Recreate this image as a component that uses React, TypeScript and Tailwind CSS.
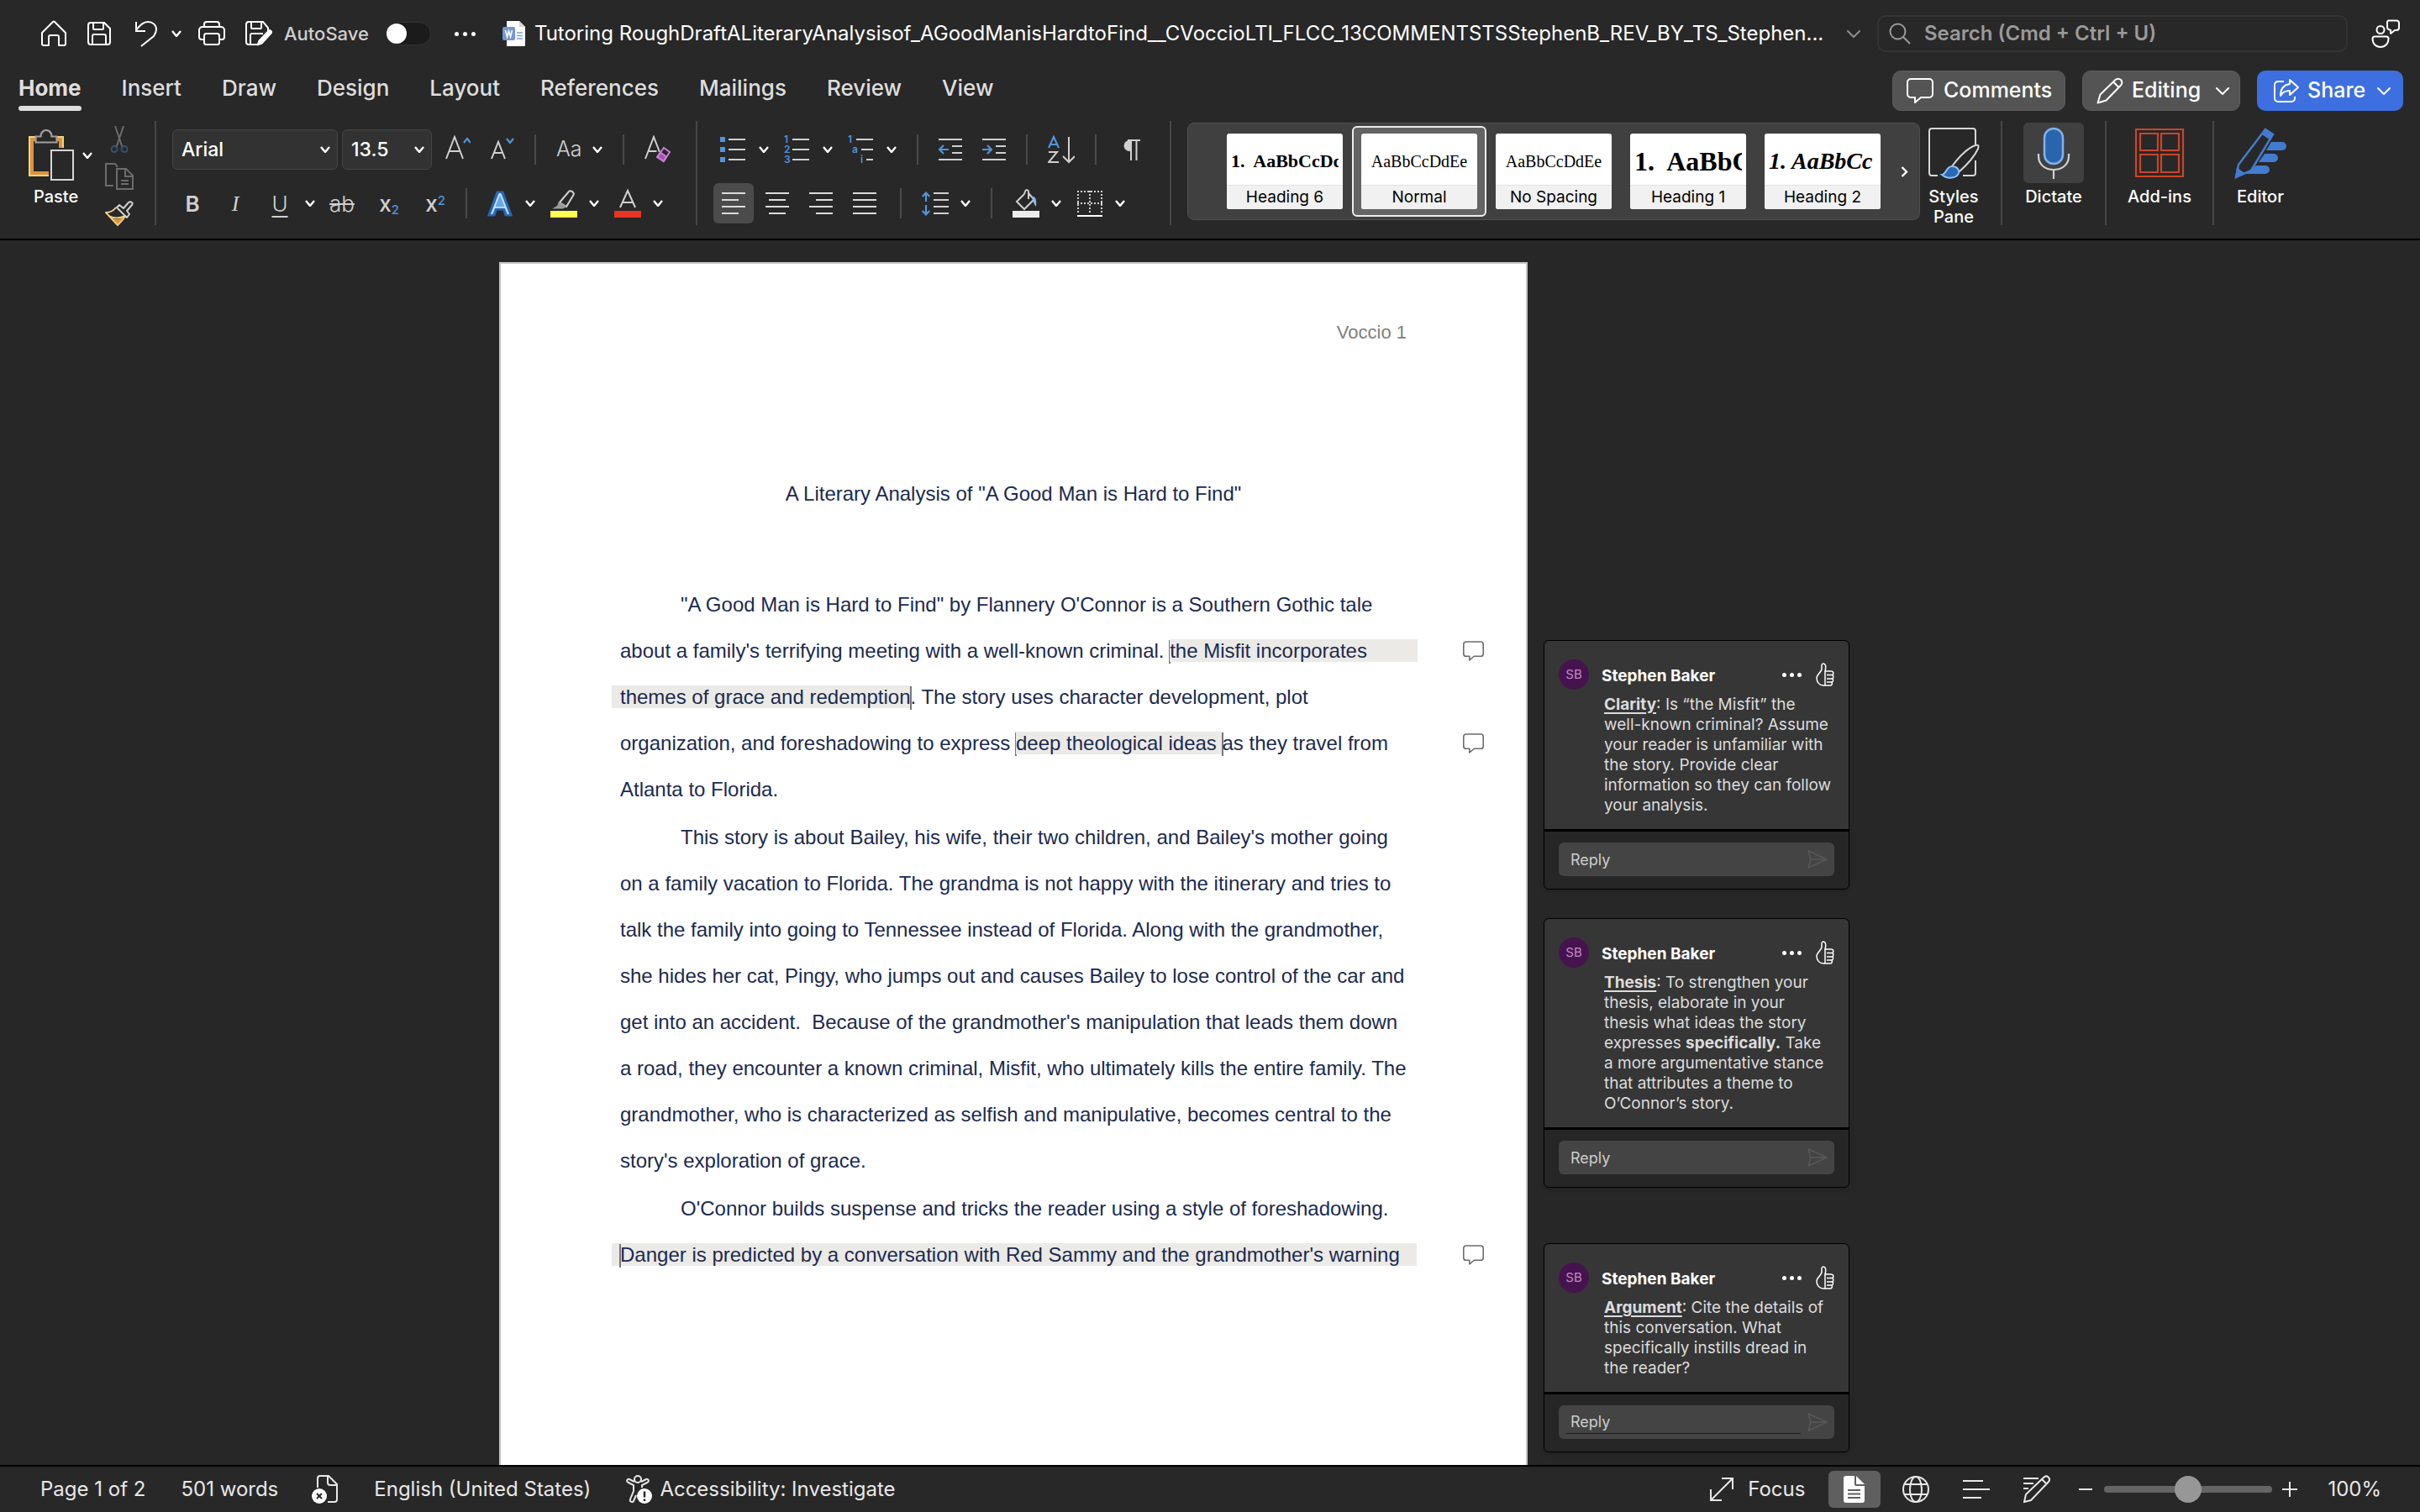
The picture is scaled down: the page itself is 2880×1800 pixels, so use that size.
import type { ReactNode } from 'react';

const stroke = { fill: 'none', stroke: 'currentColor', strokeWidth: 2 } as const;

const Chevron = ({ className = 'text-white' }: { className?: string }) => (
  <svg width="12" height="8" viewBox="0 0 12 8" className={`shrink-0 ${className}`} aria-hidden="true">
    <path d="M1 1l5 6 5-6" fill="none" stroke="currentColor" strokeWidth="2.4" />
  </svg>
);

const ThinChevron = ({ className = '' }: { className?: string }) => (
  <svg width="16" height="9" viewBox="0 0 16 9" className={`shrink-0 ${className}`} aria-hidden="true">
    <path d="M1 1l7 7 7-7" {...stroke} strokeLinecap="round" />
  </svg>
);

const Bubble = ({ w, h, className = '' }: { w: number; h: number; className?: string }) => (
  <svg width={w} height={h} viewBox="0 0 32 30" className={`shrink-0 ${className}`} aria-hidden="true">
    <path d="M5 1h22a4 4 0 0 1 4 4v14a4 4 0 0 1-4 4H17l-7 6v-6H5a4 4 0 0 1-4-4V5a4 4 0 0 1 4-4z" {...stroke} strokeLinejoin="round" />
  </svg>
);

/* Title bar */

const TitleBar = () => (
  <header className="flex h-20 items-center pr-6 pl-12 text-white">
    <button type="button" aria-label="Home">
      <svg width="32" height="32" viewBox="0 0 32 32" {...stroke}>
        <path d="M2 15L15 2c.6-.6 1.400-.6 2 0l13 13v13c0 1.100-.9 2-2 2h-6V20c0-1.100-.9-2-2-2h-8c-1.100 0-2 .9-2 2v10H4c-1.100 0-2-.9-2-2z" strokeLinejoin="round" />
      </svg>
    </button>
    <button type="button" aria-label="Save" className="ml-6">
      <svg width="28" height="30" viewBox="0 0 28 30" {...stroke}>
        <path d="M4 2h16l7 7v16a3 3 0 0 1-3 3H4a3 3 0 0 1-3-3V5a3 3 0 0 1 3-3zM7 2v7a1 1 0 0 0 1 1h10a1 1 0 0 0 1-1V2M6 28V18a2 2 0 0 1 2-2h12a2 2 0 0 1 2 2v10" />
      </svg>
    </button>
    <button type="button" aria-label="Undo" className="ml-7">
      <svg width="28" height="32" viewBox="0 0 28 32" {...stroke}>
        <path d="M2 2v11h11M2 12C7 5 11 2 16 2c6 0 10 4 10 9 0 3-1 5-3 8L8 31" />
      </svg>
    </button>
    <button type="button" aria-label="Undo history" className="ml-4"><Chevron /></button>
    <button type="button" aria-label="Print" className="ml-5">
      <svg width="32" height="30" viewBox="0 0 32 30" {...stroke}>
        <path d="M7 7V4a3 3 0 0 1 3-3h12a3 3 0 0 1 3 3v3M7 22H4a3 3 0 0 1-3-3v-8a4 4 0 0 1 4-4h22a4 4 0 0 1 4 4v8a3 3 0 0 1-3 3h-3" />
        <rect x="7" y="15" width="18" height="13" rx="2.500" />
      </svg>
    </button>
    <button type="button" aria-label="Save a copy" className="ml-6">
      <svg width="32" height="32" viewBox="0 0 32 32" {...stroke}>
        <path d="M14 29H4a3 3 0 0 1-3-3V5a3 3 0 0 1 3-3h17l6 7v6M7 2v7a1 1 0 0 0 1 1h10a1 1 0 0 0 1-1V2M6 29V18a2 2 0 0 1 2-2h13" />
        <path d="M14 30l2-6L27 12.500a2.600 2.600 0 0 1 4 3.500L20 28z" fill="currentColor" strokeWidth="1" />
      </svg>
    </button>
    <label className="ml-[14px] flex items-center gap-5 font-medium text-[#cfcfcf]">
      AutoSave
      <input
        type="checkbox"
        className="h-7 w-[54px] appearance-none rounded-full border border-[#333] bg-[#1b1b1b] before:mt-px before:block before:size-6 before:rounded-full before:bg-white"
      />
    </label>
    <button type="button" aria-label="More" className="ml-7 flex gap-1">
      <i className="size-[5px] rounded-full bg-white" />
      <i className="mx-px size-[5px] rounded-full bg-white" />
      <i className="size-[5px] rounded-full bg-white" />
    </button>
    <svg width="28" height="30" viewBox="0 0 28 30" className="ml-8 shrink-0" aria-hidden="true">
      <path d="M5 0h15l7 7v22a1 1 0 0 1-1 1H5z" fill="#fff" />
      <path d="M20 0v7h7" fill="#d5d5d5" />
      <path d="M17 14h7M17 17.500h7M17 21h7" stroke="#7ba0dc" strokeWidth="1.300" />
      <rect x="0" y="7" width="15" height="16" rx="2" fill="#7595d4" />
      <path d="M3.500 11l2 8 2-7 2 7 2-8" fill="none" stroke="#fff" strokeWidth="1.600" />
    </svg>
    <h1 className="ml-[10px] whitespace-nowrap text-[24px] text-white">
      Tutoring RoughDraftALiteraryAnalysisof_AGoodManisHardtoFind__CVoccioLTI_FLCC_13COMMENTSTSStephenB_REV_BY_TS_Stephen...
    </h1>
    <button type="button" aria-label="Document menu" className="ml-auto pr-5"><ThinChevron className="text-[#8f8f8f]" /></button>
    <label className="flex h-11 w-[560px] shrink-0 items-center gap-4 rounded-[10px] border-2 border-[#343434] px-3 text-[24px] text-[#9a9a9a]">
      <svg width="26" height="26" viewBox="0 0 26 26" {...stroke} aria-hidden="true">
        <circle cx="10.500" cy="10.500" r="9" />
        <path d="M17 17l8 8" />
      </svg>
      <input type="search" aria-label="Search" placeholder="Search (Cmd + Ctrl + U)" className="min-w-0 flex-1 bg-transparent font-semibold outline-none placeholder:text-[#9a9a9a]" />
    </label>
    <button type="button" aria-label="Presence" className="ml-7">
      <svg width="34" height="34" viewBox="0 0 34 34" {...stroke}>
        <circle cx="11" cy="12.500" r="4.500" />
        <path d="M4 20.500h14a2.500 2.500 0 0 1 2.500 2.500c0 6-4 10-9.500 10S1.500 29 1.500 23A2.500 2.500 0 0 1 4 20.500zM20 1.500h10a3 3 0 0 1 3 3V10a3 3 0 0 1-3 3h-2l-5 4v-4.200c-3-.3-4-1.300-4-3.800V4.500a3 3 0 0 1 1-3z" strokeLinejoin="round" />
      </svg>
    </button>
  </header>
);

const tabs = ['Home', 'Insert', 'Draw', 'Design', 'Layout', 'References', 'Mailings', 'Review', 'View'];

const TabBar = () => (
  <div className="flex h-16 items-start justify-between pr-5 pl-[22px]">
    <nav aria-label="Ribbon tabs" className="flex gap-12 pt-[9px] text-[26px] leading-8 text-[#dedede]">
      {tabs.map((tab) => (
        <button
          type="button"
          key={tab}
          className={tab === 'Home' ? 'font-bold after:mt-[5px] after:block after:h-[6px] after:rounded-full after:bg-[#dedede]' : 'pb-[11px] font-medium'}
        >
          {tab}
        </button>
      ))}
    </nav>
    <div className="flex gap-5 pt-1 text-[25px] font-medium text-white">
      <button type="button" className="flex h-12 w-[206px] items-center gap-3 rounded-[10px] border border-[#5c5c5c] bg-[#545454] pl-4">
        <Bubble w={32} h={30} />
        Comments
      </button>
      <button type="button" className="flex h-12 w-[188px] items-center gap-[10px] rounded-[10px] border border-[#5c5c5c] bg-[#545454] pl-4">
        <svg width="32" height="32" viewBox="0 0 32 32" {...stroke} aria-hidden="true">
          <path d="M1.500 30.500l3-10L22.500 3a4.500 4.500 0 0 1 6.500 6.500L11.500 27.500zM20 5.500l6.500 6.500" strokeLinejoin="round" />
        </svg>
        Editing
        <ThinChevron className="ml-2" />
      </button>
      <button type="button" className="flex h-12 w-[174px] items-center gap-[10px] rounded-[10px] bg-[#3d6fe0] pl-5">
        <svg width="30" height="30" viewBox="0 0 30 30" {...stroke} aria-hidden="true">
          <path d="M12 4H5a4 4 0 0 0-4 4v16a4 4 0 0 0 4 4h16a4 4 0 0 0 4-4v-2" />
          <path d="M19 2l10 9-10 9v-5c-5 0-8 1-11 6 0-8 4-13 11-14z" strokeLinejoin="round" />
        </svg>
        Share
        <ThinChevron className="ml-1" />
      </button>
    </div>
  </div>
);

/* Ribbon */

const Rule = () => <span className="h-[124px] w-[2px] shrink-0 bg-[#474747]" />;
const Sep = () => <span className="h-9 w-[2px] shrink-0 bg-[#4a4a4a]" />;

const Split = ({ label, children }: { label: string; children: ReactNode }) => (
  <button type="button" aria-label={label} className="flex items-center gap-[14px]">
    <svg width="32" height="34" viewBox="0 0 32 34" className="overflow-visible" aria-hidden="true">{children}</svg>
    <Chevron />
  </button>
);

const Icon = ({ label, w = 28, children }: { label: string; w?: number; children: ReactNode }) => (
  <button type="button" aria-label={label}>
    <svg width={w} height="34" viewBox={`0 0 ${w} 34`} aria-hidden="true">{children}</svg>
  </button>
);

const ClipboardGroup = () => (
  <div className="flex pl-8">
    <button type="button" className="mt-[10px] flex w-[78px] flex-col items-center">
      <span className="flex items-center gap-2">
        <svg width="58" height="62" viewBox="0 0 58 62" fill="none" aria-hidden="true">
          <path d="M3 9h40v46H3z" stroke="#f3d489" strokeWidth="2" />
          <path d="M6 12h34v40H6z" stroke="#dd9439" strokeWidth="4" />
          <path d="M10.500 15.500V8.500h6c0-10 13-10 13 0h6v7z" fill="#282828" stroke="#a0a0a0" strokeWidth="2.200" />
          <path d="M26 22h32v40H26z" fill="#282828" />
          <path d="M29 25h26v35H29z" stroke="#d6d6d6" strokeWidth="2" />
        </svg>
        <Chevron />
      </span>
      <span className="mt-[6px] self-start pl-2 leading-6">Paste</span>
    </button>
    <div className="mr-[25px] ml-[15px] flex w-[34px] flex-col items-center gap-3 pt-[6px]">
      <button type="button" aria-label="Cut">
        <svg width="34" height="32" viewBox="0 0 34 32" fill="none" strokeWidth="2">
          <path d="M12 0l8.500 25M22 0l-8.500 25" stroke="#6c6c6c" />
          <circle cx="11" cy="27.500" r="3.500" stroke="#37536f" />
          <circle cx="23" cy="27.500" r="3.500" stroke="#37536f" />
        </svg>
      </button>
      <button type="button" aria-label="Copy">
        <svg width="34" height="32" viewBox="0 0 34 32" fill="none" stroke="#6c6c6c" strokeWidth="2">
          <path d="M10 27H1V1h11l3 4M14 7h11l8 8v16H14zM24 7v9h9M19 21h9M19 25h9" />
        </svg>
      </button>
      <button type="button" aria-label="Format painter">
        <svg width="34" height="32" viewBox="0 0 34 32" fill="none" strokeWidth="2" strokeLinejoin="round">
          <path d="M5 20c7 4 12 4 19-.5L15 29z" fill="#dd9439" />
          <path d="M13 9c-3 4-7 6-12 6l14 15c4-4 8-8 9-11" stroke="#f0cf83" />
          <path d="M5 19.500c7 3 12 3 19-.5" stroke="#f0cf83" />
          <path d="M14 9l3-3 5 4 6-7c3-2 6 1 4 3l-6 7 3 4-3 4z" stroke="#d0d0d0" />
        </svg>
      </button>
    </div>
  </div>
);

const FontGroup = () => (
  <div className="flex w-[642px] shrink-0 flex-col gap-4 pt-[10px] pl-[19px]">
    <div className="flex h-12 items-center gap-4">
      <div className="flex gap-[5px] text-[23px] text-white">
        <label className="grid h-12 w-[197px] items-center rounded-md border border-[#454545] bg-[#323232]">
          <select aria-label="Font" className="col-start-1 row-start-1 h-full w-full appearance-none bg-transparent pl-[10px]">
            <option>Arial</option>
          </select>
          <span className="col-start-1 row-start-1 justify-self-end pr-2"><Chevron /></span>
        </label>
        <label className="grid h-12 w-[107px] items-center rounded-md border border-[#454545] bg-[#323232]">
          <select aria-label="Font size" className="col-start-1 row-start-1 h-full w-full appearance-none bg-transparent pl-[10px]">
            <option>13.5</option>
          </select>
          <span className="col-start-1 row-start-1 justify-self-end pr-2"><Chevron /></span>
        </label>
      </div>
      <div className="flex items-center gap-6">
        <Icon label="Grow font" w={30}>
          <path d="M1 28L11 2l10 26M4.500 19h13" fill="none" stroke="#d0d0d0" strokeWidth="2" />
          <path d="M22 9l4-5 4 5" fill="none" stroke="#4f95dc" strokeWidth="2.200" />
        </Icon>
        <Icon label="Shrink font">
          <path d="M1 28l8-20 8 20M4 21h10" fill="none" stroke="#d0d0d0" strokeWidth="2" />
          <path d="M19 4l4 5 4-5" fill="none" stroke="#4f95dc" strokeWidth="2.200" />
        </Icon>
        <Sep />
        <button type="button" aria-label="Change case" className="flex items-center gap-3 text-[25px] font-light text-[#d0d0d0]">
          Aa
          <Chevron />
        </button>
        <Sep />
        <Icon label="Clear formatting" w={32}>
          <path d="M1 28L11 2l7 18M4.500 19h10" fill="none" stroke="#d0d0d0" strokeWidth="2" />
          <path d="M23 15l7 5-7 11-8-5z" fill="#282828" stroke="#c67fd4" strokeWidth="2" />
          <path d="M19 20.500l7 5-3.500 5.500-7-5z" fill="#a74fb8" stroke="#c67fd4" strokeWidth="2" />
        </Icon>
      </div>
    </div>
    <div className="flex h-12 items-center text-[26px] text-[#d0d0d0]">
      <button type="button" className="w-12 font-semibold">B</button>
      <button type="button" className="w-[54px] font-['Liberation_Serif',serif] italic">I</button>
      <button type="button" className="w-[52px] font-light underline underline-offset-[5px]">U</button>
      <button type="button" aria-label="Underline style" className="flex w-5 justify-center"><Chevron /></button>
      <button type="button" className="w-14 font-light line-through">ab</button>
      <button type="button" aria-label="Subscript" className="w-14">x<sub className="text-[15px] text-[#4f95dc]">2</sub></button>
      <button type="button" aria-label="Superscript" className="w-[54px]">x<sup className="text-[15px] text-[#4f95dc]">2</sup></button>
      <div className="ml-[9px] flex items-center gap-[18px]">
        <span className="pr-[5px]"><span className="block h-9 w-[2px] bg-[#4a4a4a]" /></span>
        <Split label="Text effects">
          <path d="M3 31L13 4h6l10 27h-6l-2.500-7h-9L9 31z" fill="#6aa9e9" stroke="#2a67b4" strokeWidth="3" />
          <path d="M6 30L15.500 6h1L26 30M9.500 22h13" fill="none" stroke="#d7e9fb" strokeWidth="1.500" />
        </Split>
        <Split label="Highlight">
          <path d="M11 16L22 3c2-2 7 1 5.500 4L19 21z" fill="none" stroke="#d0d0d0" strokeWidth="2" />
          <path d="M10 15l9 6-4 2.500H2L8 20z" fill="#9a9a9a" />
          <rect y="26" width="32" height="8" fill="#fcfc52" />
        </Split>
        <Split label="Font color">
          <path d="M7 22L16 2l9 20M10 16h12" fill="none" stroke="#d0d0d0" strokeWidth="2" />
          <rect y="26" width="32" height="8" fill="#e93323" />
        </Split>
      </div>
    </div>
  </div>
);

const alignments = [
  { label: 'Align left', d: 'M0 5h28M0 13h20M0 21h28M0 29h20' },
  { label: 'Center', d: 'M0 5h28M4 13h20M0 21h28M4 29h20' },
  { label: 'Align right', d: 'M0 5h28M8 13h20M0 21h28M8 29h20' },
  { label: 'Justify', d: 'M0 5h28M0 13h28M0 21h28M0 29h28' },
];

const ParagraphGroup = () => (
  <div className="flex w-[562px] shrink-0 flex-col gap-4 pt-[10px] pl-[19px]">
    <div className="flex h-12 items-center gap-6 pl-2">
      <div className="flex gap-[18px]">
        <Split label="Bullets">
          <path d="M0 2h6v6H0zM0 14h6v6H0zM0 26h6v6H0z" fill="#4f95dc" />
          <path d="M10 5h20M10 17h20M10 29h20" stroke="#d0d0d0" strokeWidth="2" />
        </Split>
        <Split label="Numbering">
          <g fill="#4f95dc" fontSize="12" fontWeight="600">
            <text x="0" y="9">1</text>
            <text x="0" y="21">2</text>
            <text x="0" y="33">3</text>
          </g>
          <path d="M10 5h20M10 17h20M10 29h20" stroke="#d0d0d0" strokeWidth="2" />
        </Split>
        <Split label="Multilevel list">
          <g fill="#4f95dc" fontSize="12" fontWeight="600">
            <text x="0" y="9">1</text>
            <text x="5" y="21">a</text>
            <text x="15" y="33">i</text>
          </g>
          <path d="M10 5h20M16 17h14M22 29h8" stroke="#d0d0d0" strokeWidth="2" />
        </Split>
      </div>
      <Sep />
      <Icon label="Decrease indent">
        <path d="M0 5h28M16 13h12M16 21h12M0 29h28" stroke="#d0d0d0" strokeWidth="2" />
        <path d="M12 17H1M6 12l-5 5 5 5" fill="none" stroke="#4f95dc" strokeWidth="2.200" />
      </Icon>
      <Icon label="Increase indent">
        <path d="M0 5h28M16 13h12M16 21h12M0 29h28" stroke="#d0d0d0" strokeWidth="2" />
        <path d="M0 17h11M6 12l5 5-5 5" fill="none" stroke="#4f95dc" strokeWidth="2.200" />
      </Icon>
      <Sep />
      <Icon label="Sort" w={32}>
        <path d="M1 15L7 2l6 13M3 11h8" fill="none" stroke="#4f95dc" strokeWidth="2.200" />
        <path d="M1 20h10L1 32h12M25 2v29M18 25l7 7 7-7" fill="none" stroke="#d0d0d0" strokeWidth="2" />
      </Icon>
      <Sep />
      <Icon label="Show marks" w={36}>
        <path d="M26 6H15a6.500 6.500 0 0 0 0 13h1V5" fill="#d0d0d0" />
        <path d="M17 30V6M23.500 30V6M13 6h15" fill="none" stroke="#d0d0d0" strokeWidth="2" />
      </Icon>
    </div>
    <div className="flex h-12 items-center gap-6">
      <div className="mr-[-6px] flex gap-1">
        {alignments.map(({ label, d }, i) => (
          <button
            type="button"
            key={label}
            aria-label={label}
            className={`flex h-12 w-12 items-center justify-center rounded-md ${i === 0 ? 'bg-[#4b4b4b]' : ''}`}
          >
            <svg width="28" height="34" viewBox="0 0 28 34">
              <path d={d} stroke="#dcdcdc" strokeWidth="2" />
            </svg>
          </button>
        ))}
      </div>
      <Sep />
      <Split label="Line spacing">
        <path d="M14 5h18M14 13h18M14 21h18M14 29h18" stroke="#d0d0d0" strokeWidth="2" />
        <path d="M5 15V4M.8 9L5 4.500 9.200 9M5 19v11M.8 26L5 30.500 9.200 26" fill="none" stroke="#4f95dc" strokeWidth="2.200" />
      </Split>
      <Sep />
      <div className="flex gap-[18px]">
        <Split label="Shading">
          <path d="M14 6L5 15l9 9 12-12M14 6l1-3c1-3 4-2 4 0v9M19 5l7 8" fill="none" stroke="#d0d0d0" strokeWidth="2" />
          <path d="M22 9c5-1 7 3 6 12-3-3-3-7-6-12z" fill="#8db9e8" />
          <rect y="26" width="32" height="8" fill="#ececec" />
        </Split>
        <Split label="Borders">
          <path d="M1 3h30M1 17h30M2 2v28M16 2v28M30 2v28" fill="none" stroke="#d0d0d0" strokeWidth="2" strokeDasharray="2 2" />
          <path d="M1 32h30" stroke="#fff" strokeWidth="2" />
        </Split>
      </div>
    </div>
  </div>
);

const styles = [
  { name: 'Heading 6', sample: '1.  AaBbCcDd', look: 'text-[22px] font-bold' },
  { name: 'Normal', sample: 'AaBbCcDdEe', look: 'text-[20px] font-normal justify-center' },
  { name: 'No Spacing', sample: 'AaBbCcDdEe', look: 'text-[20px] font-normal justify-center' },
  { name: 'Heading 1', sample: '1.  AaBbC', look: 'text-[32px] font-bold' },
  { name: 'Heading 2', sample: '1. AaBbCc', look: 'text-[28px] font-bold italic' },
];

const StyleGallery = () => (
  <div className="mt-[2px] ml-[19px] flex h-[116px] shrink-0 items-center rounded-lg border border-[#505050] bg-[#404040] pl-[35px]">
    {styles.map(({ name, sample, look }) => (
      <button
        type="button"
        key={name}
        className={`h-[108px] w-[160px] rounded-md border-2 px-[9px] py-[7px] ${name === 'Normal' ? 'border-[#ececec] bg-[#646464]' : 'border-transparent'}`}
      >
        <span className="flex h-full flex-col overflow-hidden rounded-[3px] bg-white text-black">
          <span className={`mx-[5px] flex h-[61px] items-center overflow-hidden pt-1 font-['Liberation_Serif',serif] whitespace-pre ${look}`}>
            {sample}
          </span>
          <span className="flex-1 border-t border-[#e2e2e2] bg-[#f1f1f1] text-[19px] leading-[27px] font-normal">{name}</span>
        </span>
      </button>
    ))}
    <button type="button" aria-label="More styles" className="flex w-[35px] justify-center">
      <svg width="9" height="13" viewBox="0 0 9 13"><path d="M1.500 1l5.500 5.500L1.500 12" fill="none" stroke="#fff" strokeWidth="2.400" /></svg>
    </button>
  </div>
);

const BigButton = ({ label, width, active, children }: { label: string; width: string; active?: boolean; children: ReactNode }) => (
  <button type="button" className={`mt-[2px] flex shrink-0 flex-col items-center self-start ${width}`}>
    <span className={`flex size-[72px] items-center justify-center rounded-md ${active ? 'bg-[#404040]' : ''}`}>
      <svg width="62" height="62" viewBox="0 0 62 62" aria-hidden="true">{children}</svg>
    </span>
    <span className="mt-1 leading-6">{label}</span>
  </button>
);

const Ribbon = () => (
  <div className="flex h-[142px] items-start border-b-2 border-black text-[20px] font-medium text-white">
    <ClipboardGroup />
    <Rule />
    <FontGroup />
    <Rule />
    <ParagraphGroup />
    <Rule />
    <StyleGallery />
    <BigButton label="Styles Pane" width="w-20 mr-4">
      <path d="M12 58H5a3 3 0 0 1-3-3V5a3 3 0 0 1 3-3h49a3 3 0 0 1 3 3v16M57 40v15a3 3 0 0 1-3 3H42" fill="none" stroke="#d6d6d6" strokeWidth="2" />
      <path d="M29 47C38 35 48 25 57 22c4-1 4 1 3 4-4 9-14 20-23 28z" fill="#282828" stroke="#d6d6d6" strokeWidth="2" />
      <path d="M17 57c5 0 5-10 12-10 6 0 9 4 8 8-2 6-13 8-20 2z" fill="#2a67b4" stroke="#8fc0f0" strokeWidth="2" />
    </BigButton>
    <Rule />
    <BigButton label="Dictate" width="w-[122px]" active>
      <rect x="20" y="2" width="22" height="42" rx="11" fill="#2a64ae" stroke="#7fb4ea" strokeWidth="2.500" />
      <path d="M13 32v3c0 10 8 16 18 16s18-6 18-16v-3M31 51v11" fill="none" stroke="#d0d0d0" strokeWidth="2.200" />
    </BigButton>
    <Rule />
    <BigButton label="Add-ins" width="w-[126px]">
      <path d="M3 3h56v56H3zM8 8h21v20H8zM33 8h21v20H33zM8 33h21v21H8zM33 33h21v21H33z" fill="none" stroke="#c9452a" strokeWidth="2.200" />
    </BigButton>
    <Rule />
    <BigButton label="Editor" width="w-[110px]">
      <path d="M44 18h13a5 5 0 0 1 0 10H38zM36 32h11a5 5 0 0 1 0 10H29zM26 46h11a5 5 0 0 1 0 10H14z" fill="#437bd0" />
      <path d="M37 3l9 6-26 43L2 60 5 45z" fill="#282828" stroke="#437bd0" strokeWidth="2.500" />
      <path d="M37 2l10 7-4 7-10-7zM3 48l9 7-11 6z" fill="#437bd0" />
    </BigButton>
  </div>
);

/* Document */

const Caret = () => <span className="-mx-px inline-block h-7 w-[2px] bg-[#777] align-[-7px]" />;

const Mark = ({ className = '', children }: { className?: string; children: ReactNode }) => (
  <mark className={`bg-[#ebeae7] text-inherit ${className}`}>{children}</mark>
);

const Line = ({ indent, comment, children }: { indent?: boolean; comment?: boolean; children: ReactNode }) => (
  <span className="flex items-center">
    <span className={`w-[936px] shrink-0 whitespace-pre ${indent ? 'pl-[72px]' : ''}`}>{children}</span>
    {comment && <Bubble w={25} h={24} className="ml-[67px] text-[#6b6b6b]" />}
  </span>
);

const Page = () => (
  <article className="min-h-full w-[1224px] shrink-0 border-2 border-b-0 border-[#c4c4c4] bg-white pt-[70px] pl-[142px] font-['Liberation_Sans',Arial,sans-serif] text-[24px] leading-[55px] text-[#1b2a50]">
    <p className="w-[936px] text-right text-[22px] leading-6 text-[#808080]">Voccio 1</p>
    <h2 className="mt-[152px] w-[936px] text-center">A Literary Analysis of "A Good Man is Hard to Find"</h2>
    <div className="mt-[77px] flex flex-col gap-[2px]">
      <p>
        <Line indent>"A Good Man is Hard to Find" by Flannery O'Connor is a Southern Gothic tale</Line>
        <Line comment>about a family's terrifying meeting with a well-known criminal. <Caret /><Mark className="pr-[60px]">the Misfit incorporates</Mark></Line>
        <Line><Mark className="-ml-[10px] pl-[10px]">themes of grace and redemption</Mark><Caret />. The story uses character development, plot</Line>
        <Line comment>organization, and foreshadowing to express <Caret /><Mark>deep theological ideas </Mark><Caret />as they travel from</Line>
        <Line>Atlanta to Florida.</Line>
      </p>
      <p>
        <Line indent>This story is about Bailey, his wife, their two children, and Bailey's mother going</Line>
        <Line>on a family vacation to Florida. The grandma is not happy with the itinerary and tries to</Line>
        <Line>talk the family into going to Tennessee instead of Florida. Along with the grandmother,</Line>
        <Line>she hides her cat, Pingy, who jumps out and causes Bailey to lose control of the car and</Line>
        <Line>{"get into an accident.  Because of the grandmother's manipulation that leads them down"}</Line>
        <Line>a road, they encounter a known criminal, Misfit, who ultimately kills the entire family. The</Line>
        <Line>grandmother, who is characterized as selfish and manipulative, becomes central to the</Line>
        <Line>story's exploration of grace.</Line>
      </p>
      <p>
        <Line indent>O'Connor builds suspense and tricks the reader using a style of foreshadowing.</Line>
        <Line comment><Mark className="-ml-[10px] pr-[20px] pl-[10px]"><Caret />Danger is predicted by a conversation with Red Sammy and the grandmother's warning</Mark></Line>
      </p>
    </div>
  </article>
);

/* Comments */

const Comment = ({ topic, underlined, className = '', children }: { topic: string; underlined?: boolean; className?: string; children: ReactNode }) => (
  <section className={`rounded-md border border-black bg-[#262626] shadow-md ${className}`}>
    <div className="rounded-t-md border-b-[3px] border-black bg-[#363636] px-[17px] pt-[22px] pb-4">
      <div className="flex items-center text-white">
        <span className="flex size-9 items-center justify-center rounded-full bg-[#46134f] text-[15px] text-[#c08bc9]">SB</span>
        <strong className="ml-[15px] flex-1 pt-1 text-[19px] font-bold">Stephen Baker</strong>
        <button type="button" aria-label="More" className="flex gap-1">
          <i className="size-[5px] rounded-full bg-white" />
          <i className="size-[5px] rounded-full bg-white" />
          <i className="size-[5px] rounded-full bg-white" />
        </button>
        <button type="button" aria-label="Like" className="ml-[17px]">
          <svg width="22" height="28" viewBox="0 0 22 28" fill="none" stroke="currentColor" strokeWidth="1.500">
            <path d="M11 10h7c3.500 0 3.500 4 1.500 4.500 2 .5 1.500 4 0 4.500 1.500.5 1.500 3.500-.5 4 1 1.500 0 4-2 4H9c-5 0-8-4-8-9 0-4 6-7 6-11 0-3-.5-6 2-6s3.500 3 2 9z" strokeLinejoin="round" />
            <path d="M20 14.500h-7M20 19h-7M19 23h-6M11 10v17" />
          </svg>
        </button>
      </div>
      <p className="mt-[6px] pl-[54px] text-[19px] leading-6 whitespace-nowrap text-[#dcdcdc]">
        <b className="underline decoration-2 underline-offset-[3px]">{topic}</b>{children}
      </p>
    </div>
    <form className="px-[17px] pt-[13px] pb-[15px]">
      <div className="flex h-10 items-center gap-2 rounded-md bg-[#444] pr-2 pl-2">
        <input
          aria-label={`Reply to ${topic}`}
          placeholder="Reply"
          className={`h-7 min-w-0 flex-1 bg-transparent px-[6px] text-[18px] outline-none placeholder:text-[#cdcdcd] ${underlined ? 'border-b border-[#222]' : ''}`}
        />
        <button type="button" aria-label="Send">
          <svg width="24" height="22" viewBox="0 0 24 22" fill="none" stroke="#585858" strokeWidth="1.500">
            <path d="M1 1l22 10L1 21l3-10zM4 11h18" strokeLinejoin="round" />
          </svg>
        </button>
      </div>
    </form>
  </section>
);

const Comments = () => (
  <aside aria-label="Comments" className="ml-[19px] w-[364px] shrink-0 pt-[450px]">
    <Comment topic="Clarity">
      : Is “the Misfit” the<br />well-known criminal? Assume<br />your reader is unfamiliar with<br />the story. Provide clear<br />information so they can follow<br />your analysis.
    </Comment>
    <Comment topic="Thesis" className="mt-[34px]">
      : To strengthen your<br />thesis, elaborate in your<br />thesis what ideas the story<br />expresses <b>specifically.</b> Take<br />a more argumentative stance<br />that attributes a theme to<br />O’Connor’s story.
    </Comment>
    <Comment topic="Argument" underlined className="mt-[66px]">
      : Cite the details of<br />this conversation. What<br />specifically instills dread in<br />the reader?
    </Comment>
  </aside>
);

/* Status bar */

const StatusBar = () => (
  <footer className="flex h-14 shrink-0 items-center justify-between border-t-2 border-black pr-[46px] pl-12 text-[24px] text-[#e8e8e8]">
    <div className="flex items-center">
      <span>Page 1 of 2</span>
      <span className="ml-[42px]">501 words</span>
      <button type="button" aria-label="Proofing errors" className="ml-10">
        <svg width="32" height="34" viewBox="0 0 32 34" {...stroke}>
          <path d="M7 15V4a3 3 0 0 1 3-3h10l10 10v18a3 3 0 0 1-3 3h-8M19 1v8a3 3 0 0 0 3 3h8" />
          <circle cx="9" cy="25" r="9" fill="#fff" stroke="none" />
          <path d="M6 22l6 6M12 22l-6 6" stroke="#282828" />
        </svg>
      </button>
      <span className="ml-[42px]">English (United States)</span>
      <button type="button" className="ml-[42px] flex items-center gap-2">
        <svg width="32" height="34" viewBox="0 0 32 34" {...stroke} aria-hidden="true">
          <circle cx="14" cy="5" r="4" />
          <path d="M10 8L4 5C1 4 0 8 3 9l6 3v7L5 29c-1 3 3 4 4 2l3-7M18 8l6-3c3-1 4 3 1 4l-6 3v3" />
          <circle cx="22" cy="25" r="9" fill="#fff" stroke="none" />
          <path d="M22 19.500v7M22 28.500v2.500" stroke="#282828" strokeWidth="2.500" />
        </svg>
        Accessibility: Investigate
      </button>
    </div>
    <div className="flex items-center">
      <button type="button" className="flex items-center gap-4">
        <svg width="30" height="30" viewBox="0 0 30 30" {...stroke} aria-hidden="true">
          <path d="M15 2h13v13M2 15v13h13M28 2L2 28" />
        </svg>
        Focus
      </button>
      <button type="button" aria-label="Print layout" className="ml-7 flex h-11 w-[62px] items-center justify-center rounded-md bg-[#5f5f5f]">
        <svg width="26" height="32" viewBox="0 0 26 32">
          <path d="M3 0h10v10a2 2 0 0 0 2 2h10v17a3 3 0 0 1-3 3H3a3 3 0 0 1-3-3V3a3 3 0 0 1 3-3zM15 0l10 10H15z" fill="#fff" />
          <path d="M5 17h15M5 21.500h15M5 26h15" stroke="#5f5f5f" strokeWidth="2" />
        </svg>
      </button>
      <button type="button" aria-label="Web layout" className="ml-[26px]">
        <svg width="32" height="34" viewBox="0 0 32 34" {...stroke}>
          <circle cx="16" cy="17" r="15" />
          <ellipse cx="16" cy="17" rx="7" ry="15" />
          <path d="M3 11h26M3 23h26" />
        </svg>
      </button>
      <button type="button" aria-label="Outline" className="ml-10">
        <svg width="32" height="24" viewBox="0 0 32 24" {...stroke}><path d="M0 2h24M0 12h32M0 22h22" /></svg>
      </button>
      <button type="button" aria-label="Draft" className="ml-10">
        <svg width="32" height="34" viewBox="0 0 32 34" {...stroke}>
          <path d="M1 32l2-9L24 3c4-4 9 1 6 5L9 30zM22 5l6 6M0 4h18M0 10h12M0 16h6" />
        </svg>
      </button>
      <button type="button" aria-label="Zoom out" className="ml-[34px] h-[2px] w-4 bg-[#e8e8e8]" />
      <input
        type="range"
        aria-label="Zoom"
        min="0"
        max="200"
        defaultValue="100"
        className="ml-[14px] h-2 w-[200px] appearance-none rounded-full bg-[#656565] [&::-webkit-slider-thumb]:size-8 [&::-webkit-slider-thumb]:appearance-none [&::-webkit-slider-thumb]:rounded-full [&::-webkit-slider-thumb]:bg-[#979797]"
      />
      <button type="button" aria-label="Zoom in" className="ml-3">
        <svg width="18" height="18" viewBox="0 0 18 18" {...stroke}><path d="M9 0v18M0 9h18" /></svg>
      </button>
      <span className="ml-9">100%</span>
    </div>
  </footer>
);

export default function App() {
  return (
    <div className="flex h-screen flex-col overflow-hidden bg-[#282828] font-[Inter,sans-serif] text-[22px]">
      <TitleBar />
      <TabBar />
      <Ribbon />
      <main className="flex min-h-0 flex-1 overflow-hidden bg-[#272727] pt-[26px] pl-[594px]">
        <Page />
        <Comments />
      </main>
      <StatusBar />
    </div>
  );
}
